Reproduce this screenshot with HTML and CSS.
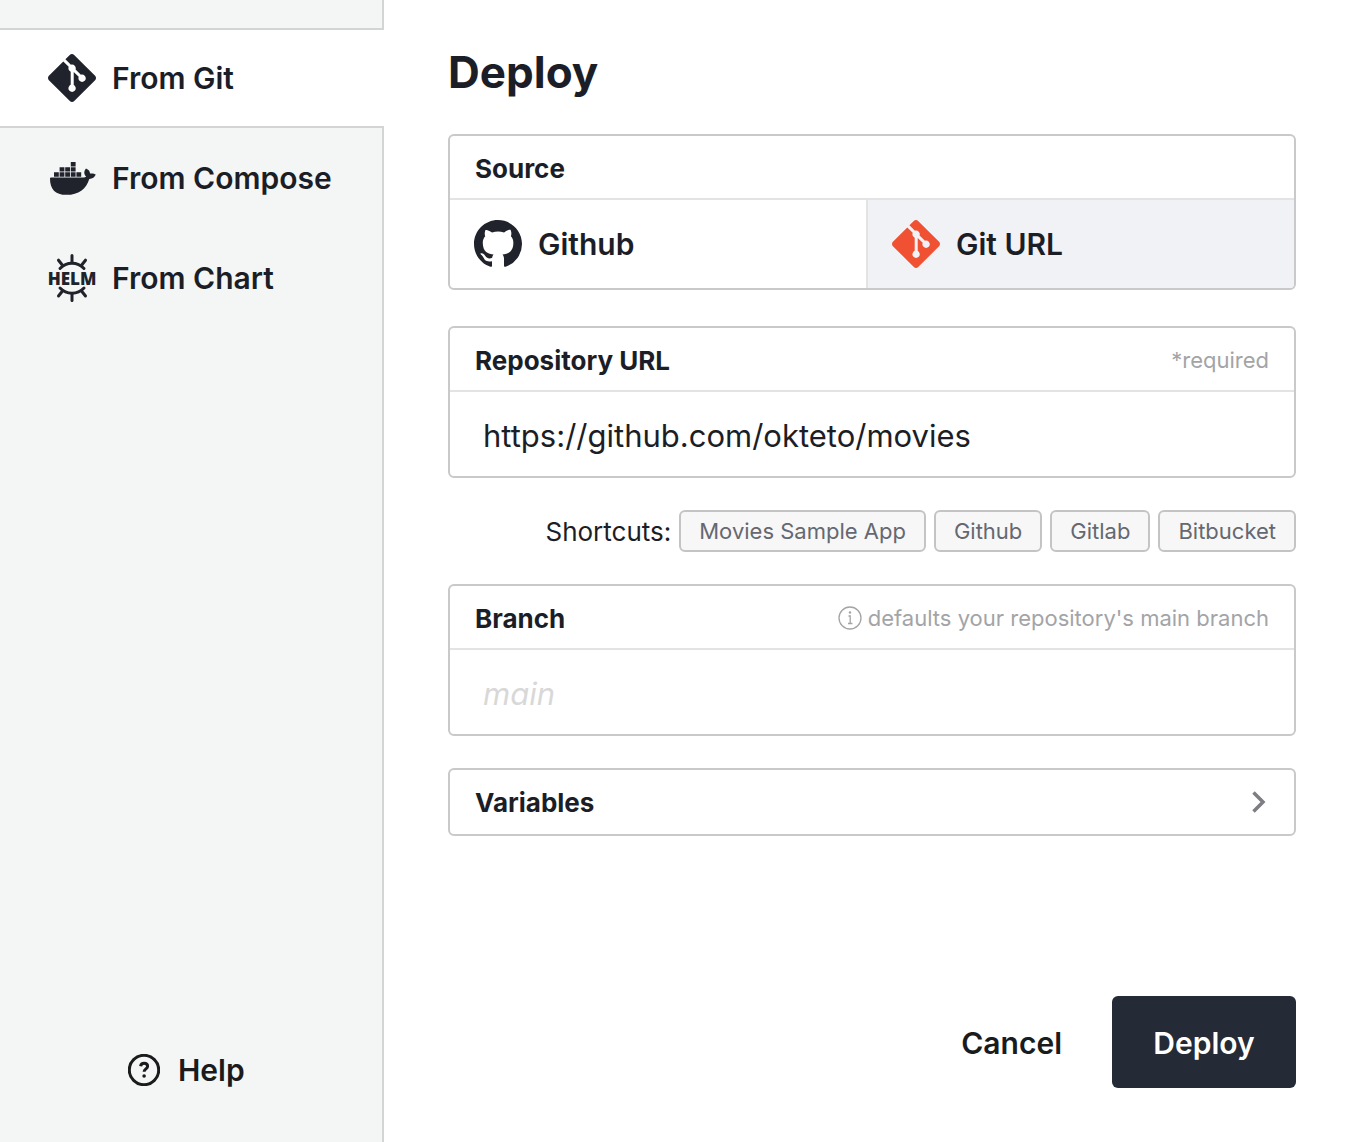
FILE: index.html
```html
<!DOCTYPE html>
<html lang="en">
<head>
<meta charset="utf-8">
<meta name="viewport" content="width=device-width, initial-scale=1">
<title>Deploy</title>
<link rel="stylesheet" href="styles.css">
</head>
<body>
<svg class="sprite" aria-hidden="true">
  <symbol id="git" viewBox="0 0 24 24">
    <path d="M23.546 10.93L13.067.452c-.604-.603-1.582-.603-2.188 0L8.708 2.627l2.76 2.76c.645-.215 1.379-.07 1.889.441.516.515.658 1.258.438 1.9l2.658 2.66c.645-.223 1.387-.078 1.9.435.721.72.721 1.884 0 2.604-.719.719-1.881.719-2.6 0-.539-.541-.674-1.337-.404-1.996L12.86 8.955v6.525c.176.086.342.203.488.348.713.721.713 1.883 0 2.6-.719.721-1.889.721-2.609 0-.719-.719-.719-1.879 0-2.598.182-.18.387-.316.605-.406V8.835c-.217-.091-.424-.222-.6-.401-.545-.545-.676-1.342-.396-2.009L7.636 3.7.45 10.881c-.6.605-.6 1.584 0 2.189l10.48 10.477c.604.604 1.582.604 2.186 0l10.43-10.43c.605-.603.605-1.582 0-2.187"/>
  </symbol>
</svg>
<div class="dialog">
  <nav class="sidebar" aria-label="Deploy method">
    <a class="tab tab-active" href="#git-form" aria-current="page">
      <svg class="icon" aria-hidden="true"><use href="#git"/></svg>
      From Git
    </a>
    <a class="tab" href="#compose">
      <svg class="icon" viewBox="0 0 48 48" aria-hidden="true">
        <path d="M6 18.300h4.800v4.400H6zM11.600 18.300h4.800v4.400h-4.800zM17.200 18.300H22v4.400h-4.800zM22.800 18.300h4.800v4.400h-4.800zM28.400 18.300h4.800v4.400h-4.800zM11.600 13.200h4.800v4.400h-4.800zM17.200 13.200H22v4.400h-4.800zM22.800 13.200h4.800v4.400h-4.800zM22.800 8h4.800v4.500h-4.800z"/>
        <path d="M2 24.400c0-.6.400-.900 1-.9h32c1.600 0 2.400-.3 3.200-.8-2.500-2.300-2.400-5.700-.2-8.100 2.600 1 4 2.800 4 5 1.900-.5 4.400-.1 5.800.9-1.100 2.800-3.300 4.400-6.500 4.400C38.200 35 30.600 40.800 18.500 40.800 7 40.800 2 35 2 24.400z"/>
      </svg>
      From Compose
    </a>
    <a class="tab" href="#chart">
      <svg class="icon" viewBox="0 0 48 48" aria-hidden="true">
        <g class="helm-wheel">
          <path d="M12 14.500a16.500 16.500 0 0 1 24 0M12 34a16.500 16.500 0 0 0 24 0"/>
          <path d="M24 1.500V8M24 40.500v6M10.500 6.200l4 5M37.500 6.200l-4 5M10.500 42l4-5M37.500 42l-4-5"/>
        </g>
        <text class="helm-word" x="24" y="31" text-anchor="middle">HELM</text>
      </svg>
      From Chart
    </a>
    <a class="help" href="#help">
      <svg class="help-icon" viewBox="0 0 32 32" aria-hidden="true">
        <circle cx="16" cy="16" r="14.700"/>
        <path d="M12.600 12.200c.3-1.800 1.700-2.900 3.500-2.900 2 0 3.500 1.200 3.500 3 0 2.600-3.500 2.700-3.500 5.500"/>
        <circle class="dot" cx="16.100" cy="22" r="1.800"/>
      </svg>
      Help
    </a>
  </nav>

  <main class="content">
    <h1>Deploy</h1>
    <form id="git-form" class="form">
      <section class="card source">
        <h2 class="card-head">Source</h2>
        <div class="source-options">
          <button type="button" class="option">
            <svg class="icon" viewBox="0 0 16 16" aria-hidden="true"><path d="M8 0C3.580 0 0 3.580 0 8c0 3.540 2.290 6.530 5.470 7.590.4.070.55-.17.55-.38 0-.19-.01-.82-.01-1.490-2.010.37-2.530-.49-2.690-.94-.09-.23-.48-.94-.82-1.130-.28-.15-.68-.52-.01-.53.63-.01 1.080.58 1.230.82.72 1.210 1.870.87 2.330.66.070-.52.28-.87.51-1.070-1.780-.2-3.640-.89-3.640-3.950 0-.87.31-1.590.82-2.150-.08-.2-.36-1.020.08-2.120 0 0 .67-.21 2.200.82.64-.18 1.320-.27 2-.27.68 0 1.360.09 2 .27 1.530-1.040 2.200-.82 2.200-.82.44 1.100.16 1.920.08 2.120.51.56.82 1.270.82 2.150 0 3.070-1.870 3.750-3.650 3.950.29.25.54.73.54 1.480 0 1.070-.01 1.930-.01 2.200 0 .21.15.46.55.38A8.013 8.013 0 0016 8c0-4.420-3.580-8-8-8z"/></svg>
            Github
          </button>
          <button type="button" class="option option-active" aria-pressed="true">
            <svg class="icon icon-git" aria-hidden="true"><use href="#git"/></svg>
            Git URL
          </button>
        </div>
      </section>

      <section class="card repository">
        <div class="card-head">
          <label for="repo">Repository URL</label>
          <span class="hint">*required</span>
        </div>
        <input id="repo" class="field" type="text" value="https://github.com/okteto/movies" required>
      </section>

      <div class="shortcuts">
        <span>Shortcuts:</span>
        <button type="button" class="chip">Movies Sample App</button>
        <button type="button" class="chip">Github</button>
        <button type="button" class="chip">Gitlab</button>
        <button type="button" class="chip">Bitbucket</button>
      </div>

      <section class="card branch">
        <div class="card-head">
          <label for="branch">Branch</label>
          <span class="hint">
            <svg class="info-icon" viewBox="0 0 24 24" aria-hidden="true">
              <circle cx="12" cy="12" r="11"/>
              <path d="M10.500 10h1.700v7.500M10 17.500h4.400"/>
              <circle class="dot" cx="12" cy="6.500" r="1.200"/>
            </svg>
            defaults your repository's main branch
          </span>
        </div>
        <input id="branch" class="field" type="text" placeholder="main">
      </section>

      <button type="button" class="card variables" aria-expanded="false">
        Variables
        <svg class="chevron" viewBox="0 0 16 24" aria-hidden="true"><path d="M2.500 2.500L12 12l-9.500 9.500"/></svg>
      </button>

      <div class="actions">
        <button type="button" class="cancel">Cancel</button>
        <button type="submit" class="submit">Deploy</button>
      </div>
    </form>
  </main>
</div>
</body>
</html>
```
FILE: styles.css
```css
* {
  box-sizing: border-box;
}

body {
  margin: 0;
  background: #fff;
  color: #1c1e27;
  font-family: Inter, "Liberation Sans", sans-serif;
  font-size: 26px;
}

button,
input {
  margin: 0;
  padding: 0;
  border: 0;
  background: none;
  color: inherit;
  font: inherit;
}

button {
  cursor: pointer;
}

.sprite {
  display: none;
}

.dialog {
  display: flex;
  min-height: 100vh;
}

/* Sidebar */

.sidebar {
  display: flex;
  flex: 0 0 384px;
  flex-direction: column;
  padding: 28px 0 40px;
  border-right: 2px solid #d3d5d5;
  background: #f4f6f5;
}

.tab,
.help,
.option,
.cancel,
.submit {
  font-size: 30px;
  font-weight: 600;
}

.tab {
  display: flex;
  align-items: center;
  gap: 16px;
  height: 100px;
  padding: 0 48px;
  color: inherit;
  text-decoration: none;
  white-space: nowrap;
}

.tab-active {
  margin-right: -2px;
  border-top: 2px solid #d3d5d5;
  border-bottom: 2px solid #d3d5d5;
  background: #fff;
}

.icon {
  flex: none;
  width: 48px;
  height: 48px;
  fill: #20222c;
}

.icon-git {
  fill: #f05133;
}

.helm-wheel {
  fill: none;
  stroke: #20222c;
  stroke-width: 3;
  stroke-linecap: round;
}

.helm-word {
  font-family: "Open Sans", sans-serif;
  font-size: 17px;
  font-weight: 800;
}

.help {
  display: flex;
  align-items: center;
  gap: 18px;
  margin: auto 0 0 128px;
  height: 64px;
  color: #191b1c;
  text-decoration: none;
}

.help-icon {
  width: 32px;
  height: 32px;
  fill: none;
  stroke: currentColor;
  stroke-width: 3;
}

.dot {
  fill: currentColor;
  stroke: none;
}

/* Content */

.content {
  display: flex;
  flex: 1;
  flex-direction: column;
  min-width: 0;
  padding: 40px 56px 54px 64px;
}

h1 {
  margin: 0 0 30px;
  font-size: 44px;
  font-weight: 700;
  line-height: 64px;
}

.form {
  display: flex;
  flex: 1;
  flex-direction: column;
}

.card {
  overflow: hidden;
  border: 2px solid #c9c9c9;
  border-radius: 6px;
}

.card-head {
  display: flex;
  align-items: center;
  justify-content: space-between;
  height: 64px;
  margin: 0;
  padding: 2px 25px 0;
  border-bottom: 2px solid #e3e3e3;
  font-size: 26px;
  font-weight: 700;
}

.source-options {
  display: grid;
  grid-template-columns: 416px 1fr;
}

.option {
  display: flex;
  align-items: center;
  gap: 16px;
  height: 88px;
  padding: 0 24px;
}

.option-active {
  border-left: 2px solid #e3e3e3;
  background: #f1f2f6;
}

.repository {
  margin-top: 36px;
}

.hint {
  display: flex;
  align-items: center;
  gap: 6px;
  color: #a3a4a7;
  font-size: 22px;
  font-weight: 400;
}

.info-icon {
  width: 24px;
  height: 24px;
  fill: none;
  stroke: currentColor;
  stroke-width: 1.300;
}

.field {
  display: block;
  width: 100%;
  height: 84px;
  padding: 2px 33px 0;
  font-size: 31px;
  outline: none;
}

.field::placeholder {
  color: #d8d8d8;
  font-style: italic;
  opacity: 1;
}

.shortcuts {
  display: flex;
  align-items: center;
  justify-content: flex-end;
  gap: 8px;
  margin: 32px 0;
}

.chip {
  height: 42px;
  padding: 0 18px;
  border: 2px solid #c4c4c4;
  border-radius: 6px;
  background: #f7f7f7;
  color: #656870;
  font-size: 22px;
  white-space: nowrap;
}

.variables {
  display: flex;
  align-items: center;
  justify-content: space-between;
  height: 68px;
  margin-top: 32px;
  padding: 0 27px 0 25px;
  font-weight: 700;
}

.chevron {
  width: 16px;
  height: 24px;
  fill: none;
  stroke: #7c7e84;
  stroke-width: 3.500;
}

.actions {
  display: flex;
  justify-content: flex-end;
  gap: 50px;
  margin-top: auto;
}

.cancel,
.submit {
  padding-top: 2px;
}

.cancel {
  color: #191b1c;
}

.submit {
  width: 184px;
  height: 92px;
  border-radius: 6px;
  background: #242a36;
  color: #fff;
}
```
